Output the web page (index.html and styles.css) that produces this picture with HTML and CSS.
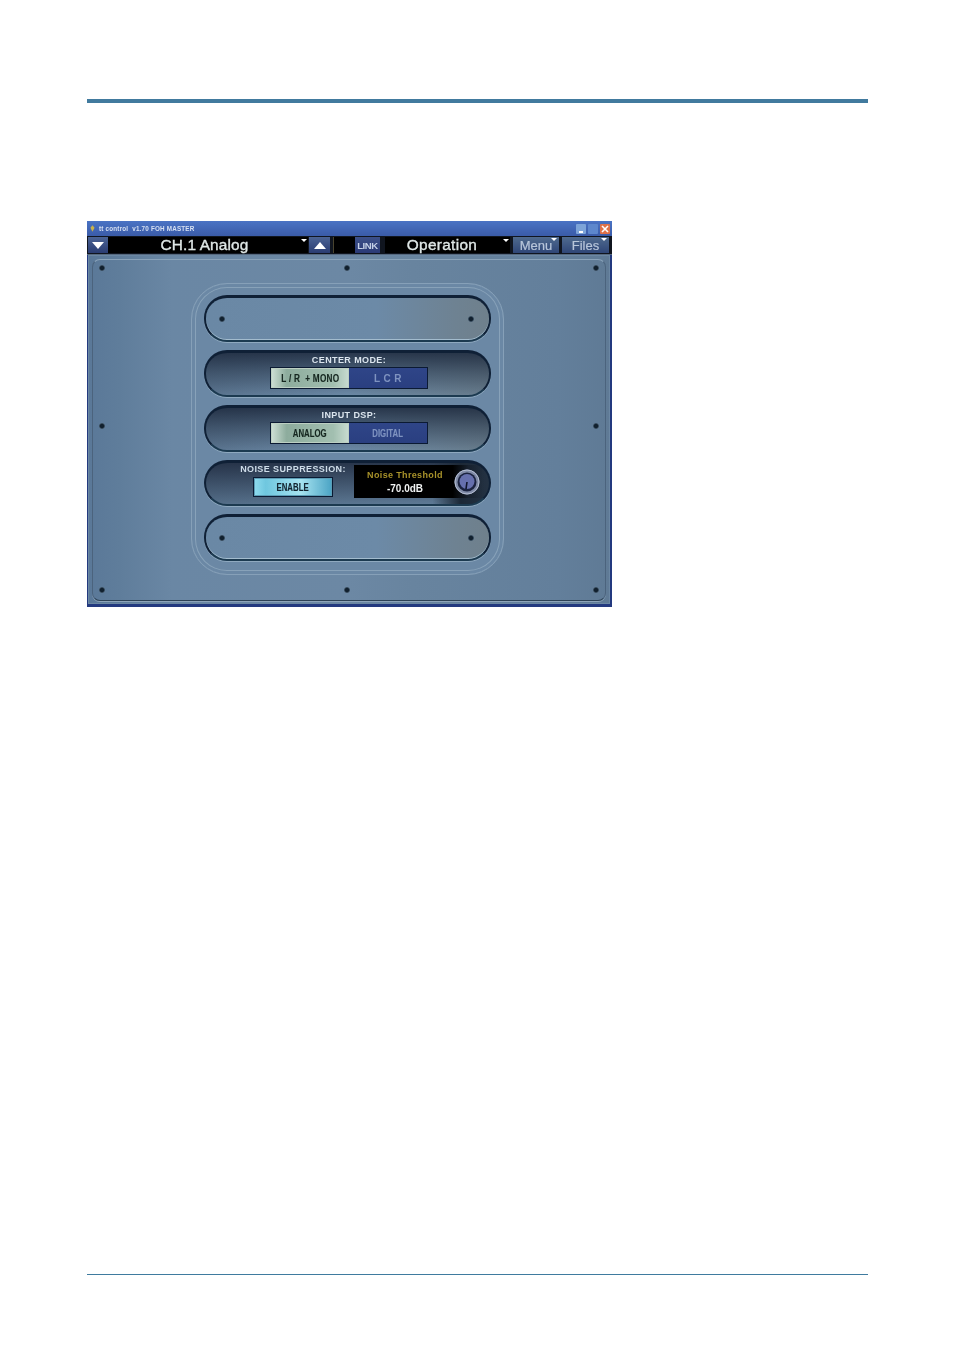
FILE: index.html
```html
<!DOCTYPE html>
<html lang="en">
<head>
<meta charset="utf-8">
<title>tt control</title>
<link rel="stylesheet" href="styles.css">
</head>
<body>
<main class="page">
  <div class="rule-top"></div>
  <section class="window">
    <header class="titlebar">
      <svg class="app-icon" viewBox="0 0 6 8" width="5" height="7"><path d="M3 0 L5.5 3 L3 8 L.5 3Z" fill="#c8b24a"/></svg>
      <span class="title-text">tt control&nbsp; v1.70 FOH MASTER</span>
      <div class="win-controls">
        <span class="wc wc-min"><i></i></span>
        <span class="wc wc-max"></span>
        <span class="wc wc-close">
          <svg viewBox="0 0 10 10" width="10" height="10"><path d="M2 2 L8 8 M8 2 L2 8" stroke="#fff" stroke-width="1.6"/></svg>
        </span>
      </div>
    </header>
    <nav class="toolbar">
      <button class="tb-btn arrow-btn arrow-down"><svg viewBox="0 0 12 7" width="12" height="7"><path d="M0 0H12L6 7Z" fill="#fff"/></svg></button>
      <div class="display display-channel"><span>CH.1 Analog</span><i class="caret caret-display"></i></div>
      <button class="tb-btn arrow-btn arrow-up"><svg viewBox="0 0 12 7" width="12" height="7"><path d="M0 7H12L6 0Z" fill="#fff"/></svg></button>
      <div class="link-group"><span class="link-black"></span><button class="tb-btn link-btn">LINK</button></div>
      <div class="display display-op"><span>Operation</span><i class="caret caret-display"></i></div>
      <button class="tb-btn menu-btn btn-menu">Menu<i class="caret caret-menu"></i></button>
      <button class="tb-btn menu-btn btn-files">Files<i class="caret caret-menu"></i></button>
    </nav>
    <div class="panel">
      <span class="screw s-tl"></span><span class="screw s-tc"></span><span class="screw s-tr"></span>
      <span class="screw s-ml"></span><span class="screw s-mr"></span>
      <span class="screw s-bl"></span><span class="screw s-bc"></span><span class="screw s-br"></span>
      <div class="plate">
        <div class="slot slot-empty"><span class="screw"></span><span class="screw"></span></div>
        <div class="slot slot-dark">
          <div class="ctl-label">CENTER MODE:</div>
          <div class="seg">
            <button class="seg-btn seg-on"><span class="cond cond-mono">L / R &nbsp;+ MONO</span></button>
            <button class="seg-btn seg-off"><span class="lcr">L C R</span></button>
          </div>
        </div>
        <div class="slot slot-dark">
          <div class="ctl-label">INPUT DSP:</div>
          <div class="seg">
            <button class="seg-btn seg-on"><span class="cond">ANALOG</span></button>
            <button class="seg-btn seg-off"><span class="cond">DIGITAL</span></button>
          </div>
        </div>
        <div class="slot slot-noise">
          <div class="noise-left">
            <div class="ctl-label">NOISE SUPPRESSION:</div>
            <button class="enable-btn"><span class="cond">ENABLE</span></button>
          </div>
          <div class="threshold">
            <div class="th-text">
              <div class="th-label">Noise Threshold</div>
              <div class="th-value">-70.0dB</div>
            </div>
            <svg class="knob" viewBox="0 0 26 26" width="26" height="26">
              <circle cx="13" cy="13" r="12.5" fill="#7f8aa6"/>
              <circle cx="13" cy="13" r="12" fill="none" stroke="#b4bdd2" stroke-width="1"/>
              <circle cx="13" cy="13" r="9.5" fill="#1b2340"/>
              <circle cx="13" cy="12.5" r="7.5" fill="#6670ae"/>
              <path d="M13 13 L12 20" stroke="#11162c" stroke-width="1.6"/>
            </svg>
          </div>
        </div>
        <div class="slot slot-empty"><span class="screw"></span><span class="screw"></span></div>
      </div>
    </div>
  </section>
  <div class="rule-bottom"></div>
</main>
</body>
</html>
```
FILE: styles.css
```css
* { box-sizing: border-box; }
html, body { margin: 0; padding: 0; background: #fff; }
body { font-family: "Liberation Sans", Arial, sans-serif; }
button { font-family: inherit; padding: 0; margin: 0; cursor: default; }

.page { width: 954px; height: 1350px; padding: 99px 86px 0 87px; overflow: hidden; }
.rule-top { height: 4px; background: #417a9e; }
.rule-bottom { height: 1px; background: #3f7b9f; margin-top: 667px; }

.window {
  width: 525px; height: 386px; margin-top: 118px;
  background: #23397f;
  padding: 0 2px 3px 1px;
  display: flex; flex-direction: column;
  filter: blur(.5px);
}

.titlebar {
  height: 15px; margin: 0 -2px 0 -1px; padding: 0 2px 0 3px;
  background: linear-gradient(#4a73c4, #3a5ba8);
  display: flex; align-items: center; gap: 4px;
}
.title-text { font-size: 6.3px; font-weight: 700; color: #d6e0f2; white-space: nowrap; letter-spacing: .2px; }
.win-controls { margin-left: auto; display: flex; gap: 2px; }
.wc { width: 10px; height: 10px; display: flex; align-items: flex-end; justify-content: center; border-radius: 1px; }
.wc-min { background: #7da4d8; }
.wc-min i { width: 4px; height: 2px; background: #fff; margin-bottom: 1px; }
.wc-max { background: #5d87cc; }
.wc-close { background: #df7148; align-items: center; }

.toolbar {
  height: 19px; background: #10151f; display: flex; align-items: stretch;
  margin: 0 -2px 0 -1px; padding: 1px 2px 1px 1px;
  border-bottom: 1px solid #56697f;
}
.tb-btn {
  border: 0; background: linear-gradient(#4b6394, #2a3c72);
  color: #e6ecf5; display: flex; align-items: center; justify-content: center;
}
.arrow-btn { width: 21px; }
.arrow-down { width: 20px; }
.arrow-up { margin-left: 1px; }
.display {
  background: #000; color: #dfe7e6; position: relative;
  display: flex; align-items: center; justify-content: center;
  font-size: 15.4px; font-weight: 400; -webkit-text-stroke: .35px #dfe7e6; letter-spacing: .15px;
}
.display-channel { width: 200px; padding-right: 7px; }
.display-op { width: 125px; margin-left: 5px; padding-right: 11px; letter-spacing: .3px; }
.link-group { display: flex; margin-left: 3px; width: 47px; background: #000; border-left: 1px solid #48432e; }
.link-black { width: 21px; }
.link-btn { width: 25px; font-size: 9.5px; font-weight: 700; color: #c6d2e8; letter-spacing: -.4px; background: linear-gradient(#3c5089, #2b3a76); }
.menu-btn {
  position: relative; font-size: 13px; color: #b8c6da; -webkit-text-stroke: .2px #b8c6da;
  background: linear-gradient(#4f6a8e, #2f4677);
}
.btn-menu { width: 46px; margin-left: 3px; }
.btn-files { width: 47px; margin-left: 3px; }
.caret { position: absolute; width: 0; height: 0; border-left: 3px solid transparent; border-right: 3px solid transparent; border-top: 3px solid #fff; }
.caret-display { right: 1px; top: 2px; }
.caret-menu { right: 2px; top: 1px; }

.panel {
  flex: 1; position: relative; display: flex; flex-direction: column; align-items: center;
  padding: 28px 3px 0 0;
  background:
    linear-gradient(90deg, #5a7898 0%, #5f7d9b 6%, #6a87a4 16%, #6c88a4 50%, #68849f 62%, #637f9b 90%, #5f7a95 100%);
  box-shadow: inset 0 0 0 1px #6b87a3;
}
.panel::before {
  content: ""; position: absolute; left: 4px; right: 4px; top: 4px; bottom: 3px;
  border-radius: 8px;
  border: 1px solid #4b637d;
  border-top-color: #8aa3ba; border-bottom-color: #2e4256;
  box-shadow: 0 1px 0 #8ea5ba;
  pointer-events: none;
}

.screw {
  display: block; width: 6px; height: 6px; border-radius: 50%;
  background: radial-gradient(circle at 50% 50%, #11202e 0 40%, #3f5467 65%, #7f94a8 100%);
}
.s-tl, .s-tc, .s-tr, .s-ml, .s-mr, .s-bl, .s-bc, .s-br { position: absolute; }
.s-tl { left: 11px; top: 10px; }
.s-tc { left: 256px; top: 10px; }
.s-tr { left: 505px; top: 10px; }
.s-ml { left: 11px; top: 168px; }
.s-mr { left: 505px; top: 168px; }
.s-bl { left: 11px; top: 332px; }
.s-bc { left: 256px; top: 332px; }
.s-br { left: 505px; top: 332px; }

.plate {
  width: 313px; height: 292px; padding: 11px 12px 0;
  border-radius: 36px; display: flex; flex-direction: column; gap: 8px;
  border: 1px solid #86a0b8;
  box-shadow: inset 0 0 0 3px #6b88a5, inset 0 0 0 4px #88a2b9;
  position: relative; z-index: 1;
  background: #6b88a5;
}

.slot {
  width: 287px; height: 47px; border-radius: 23px;
  border: 2px solid #0f2036; border-bottom-color: #1c3a50; border-top-width: 3px;
  box-shadow: 0 1px 0 #8fa9bf;
}
.slot-empty {
  display: flex; align-items: center; justify-content: space-between; padding: 0 15px 0 13px;
  background: linear-gradient(90deg, #6a88a5 0%, #6c8aa7 60%, #6e8292 88%, #6f808c 100%);
  box-shadow: 0 1px 0 #8fa9bf, inset 0 -1px 0 #a3bcce;
}
.slot-dark {
  display: flex; flex-direction: column; align-items: center;
  background:
    linear-gradient(rgba(28,40,60,.85) 0%, rgba(40,55,75,.55) 45%, rgba(85,110,135,.15) 100%),
    linear-gradient(90deg, #5b7590, #6f8daa 50%, #6b7e8c);
  padding: 2px 0 0 3px;
}
.slot-noise {
  display: flex; align-items: center; height: 46px; padding-bottom: 4px;
  background:
    linear-gradient(90deg, transparent 0 80%, #1c2836 90%, #243243 100%),
    linear-gradient(rgba(25,35,55,.8), rgba(70,95,120,.35)),
    linear-gradient(90deg, #5b7590, #6f8daa);
}

.ctl-label { font-size: 9px; font-weight: 700; color: #dbe5ee; letter-spacing: .4px; line-height: 11px; text-align: center; white-space: nowrap; }
.seg { display: flex; margin-top: 1px; border: 1px solid #0b1a33; }
.seg-btn { width: 78px; height: 20px; border: 0; font-size: 10px; white-space: nowrap; }
.cond { display: inline-block; transform: scaleX(.78); -webkit-text-stroke: .15px currentColor; }
.cond-mono { transform: scaleX(.82); letter-spacing: .3px; }
.lcr { letter-spacing: .4px; }
.seg-on {
  color: #15261f; font-weight: 700;
  background: linear-gradient(90deg, #cfe0d6 0%, #8dac9d 20%, #a2bfb0 80%, #c9dcd1 100%);
  box-shadow: inset 0 0 0 1px #bccfc2;
}
.seg-off { color: #7f93c0; background: linear-gradient(#2f4588, #2a3f80); font-weight: 700; }

.noise-left { width: 148px; display: flex; flex-direction: column; align-items: center; padding-left: 26px; margin-bottom: 2px; }
.noise-left .ctl-label { color: #cfdde9; }
.enable-btn {
  width: 80px; height: 20px; margin: 2px 1px 0 0; border: 1px solid #0b1a33;
  font-size: 10px; font-weight: 700; color: #12232f;
  background: linear-gradient(90deg, #8fdcef 0%, #6fc7df 15%, #a6e3f0 60%, #4aa3c4 100%);
  box-shadow: inset 0 0 0 1px #5b9cb5;
}
.threshold {
  width: 130px; height: 33px; display: flex; align-items: center;
  background: linear-gradient(90deg, #000 0 76%, rgba(20,28,39,.6) 88%, transparent 100%);
}
.th-text { width: 100px; text-align: center; padding-left: 2px; }
.th-label { font-size: 9px; font-weight: 700; color: #a8922a; letter-spacing: .35px; line-height: 13px; white-space: nowrap; }
.th-value { font-size: 10px; font-weight: 700; color: #f0f2f2; line-height: 13px; }
.knob { flex: none; }
```
